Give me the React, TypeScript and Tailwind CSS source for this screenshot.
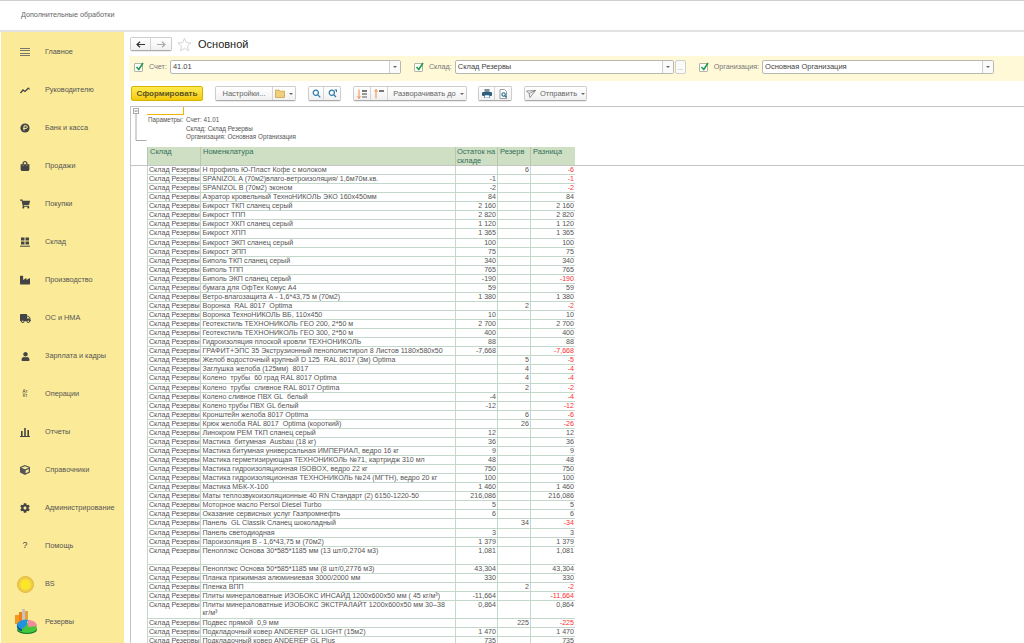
import { ReactNode } from 'react';
import { FaCog, FaCube, FaIndustry, FaShoppingBag, FaShoppingCart, FaTruck, FaUser } from 'react-icons/fa';

type Row = { name: string; stock?: string; reserve?: string; diff: string; tall?: boolean };

const rows: Row[] = [
  { name: 'Н профиль Ю-Пласт Кофе с молоком', reserve: '6', diff: '-6' },
  { name: 'SPANIZOL A (70м2)влаго-ветроизоляция/ 1,6м70м.кв.', stock: '-1', diff: '-1' },
  { name: 'SPANIZOL B (70м2) эконом', stock: '-2', diff: '-2' },
  { name: 'Аэратор кровельный ТехноНИКОЛЬ ЭКО 160х450мм', stock: '84', diff: '84' },
  { name: 'Бикрост ТКП сланец серый', stock: '2 160', diff: '2 160' },
  { name: 'Бикрост ТПП', stock: '2 820', diff: '2 820' },
  { name: 'Бикрост ХКП сланец серый', stock: '1 120', diff: '1 120' },
  { name: 'Бикрост ХПП', stock: '1 365', diff: '1 365' },
  { name: 'Бикрост ЭКП сланец серый', stock: '100', diff: '100' },
  { name: 'Бикрост ЭПП', stock: '75', diff: '75' },
  { name: 'Биполь ТКП сланец серый', stock: '340', diff: '340' },
  { name: 'Биполь ТПП', stock: '765', diff: '765' },
  { name: 'Биполь ЭКП сланец серый', stock: '-190', diff: '-190' },
  { name: 'бумага для ОфТех Комус А4', stock: '59', diff: '59' },
  { name: 'Ветро-влагозащита А - 1,6*43,75 м (70м2)', stock: '1 380', diff: '1 380' },
  { name: 'Воронка  RAL 8017  Optima', reserve: '2', diff: '-2' },
  { name: 'Воронка ТехноНИКОЛЬ ВБ, 110х450', stock: '10', diff: '10' },
  { name: 'Геотекстиль ТЕХНОНИКОЛЬ ГЕО 200, 2*50 м', stock: '2 700', diff: '2 700' },
  { name: 'Геотекстиль ТЕХНОНИКОЛЬ ГЕО 300, 2*50 м', stock: '400', diff: '400' },
  { name: 'Гидроизоляция плоской кровли ТЕХНОНИКОЛЬ', stock: '88', diff: '88' },
  { name: 'ГРАФИТ+ЭПС 35 Экструзионный пенополистирол 8 Листов 1180х580х50', stock: '-7,668', diff: '-7,668' },
  { name: 'Желоб водосточный крупный D 125  RAL 8017 (3м) Optima', reserve: '5', diff: '-5' },
  { name: 'Заглушка желоба (125мм)  8017', reserve: '4', diff: '-4' },
  { name: 'Колено  трубы  60 град RAL 8017 Optima', reserve: '4', diff: '-4' },
  { name: 'Колено  трубы  сливное RAL 8017 Optima', reserve: '2', diff: '-2' },
  { name: 'Колено сливное ПВХ GL  белый', stock: '-4', diff: '-4' },
  { name: 'Колено трубы ПВХ GL белый', stock: '-12', diff: '-12' },
  { name: 'Кронштейн желоба 8017 Optima', reserve: '6', diff: '-6' },
  { name: 'Крюк желоба RAL 8017  Optima (короткий)', reserve: '26', diff: '-26' },
  { name: 'Линокром РЕМ ТКП сланец серый', stock: '12', diff: '12' },
  { name: 'Мастика  битумная  Ausbau (18 кг)', stock: '36', diff: '36' },
  { name: 'Мастика битумная универсальная ИМПЕРИАЛ, ведро 16 кг', stock: '9', diff: '9' },
  { name: 'Мастика герметизирующая ТЕХНОНИКОЛЬ №71, картридж 310 мл', stock: '48', diff: '48' },
  { name: 'Мастика гидроизоляционная ISOBOX, ведро 22 кг', stock: '750', diff: '750' },
  { name: 'Мастика гидроизоляционная ТЕХНОНИКОЛЬ №24 (МГТН), ведро 20 кг', stock: '100', diff: '100' },
  { name: 'Мастика МБК-Х-100', stock: '1 460', diff: '1 460' },
  { name: 'Маты теплозвукоизоляционные 40 RN Стандарт (2) 6150-1220-50', stock: '216,086', diff: '216,086' },
  { name: 'Моторное масло Persol Diesel Turbo', stock: '5', diff: '5' },
  { name: 'Оказание сервисных услуг Газпромнефть', stock: '6', diff: '6' },
  { name: 'Панель  GL Classik Сланец шоколадный', reserve: '34', diff: '-34' },
  { name: 'Панель светодиодная', stock: '3', diff: '3' },
  { name: 'Пароизоляция В - 1,6*43,75 м (70м2)', stock: '1 379', diff: '1 379' },
  { name: 'Пеноплэкс Основа 30*585*1185 мм (13 шт/0,2704 м3)', stock: '1,081', diff: '1,081', tall: true },
  { name: 'Пеноплэкс Основа 50*585*1185 мм (8 шт/0,2776 м3)', stock: '43,304', diff: '43,304' },
  { name: 'Планка прижимная алюминиевая 3000/2000 мм', stock: '330', diff: '330' },
  { name: 'Пленка ВПП', reserve: '2', diff: '-2' },
  { name: 'Плиты минераловатные ИЗОБОКС ИНСАЙД 1200х600х50 мм ( 45 кг/м³)', stock: '-11,664', diff: '-11,664' },
  { name: 'Плиты минераловатные ИЗОБОКС ЭКСТРАЛАЙТ 1200х600х50 мм 30–38 кг/м³', stock: '0,864', diff: '0,864', tall: true },
  { name: 'Подвес прямой  0,9 мм', reserve: '225', diff: '-225' },
  { name: 'Подкладочный ковер ANDEREP GL LIGHT (15м2)', stock: '1 470', diff: '1 470' },
  { name: 'Подкладочный ковер ANDEREP GL Plus', stock: '735', diff: '735' },
];

const MenuIcon = () => (
  <div className="flex h-2 w-2.5 flex-col justify-between">
    <div className="h-px bg-[#77776a]" />
    <div className="h-px bg-[#77776a]" />
    <div className="h-px bg-[#77776a]" />
    <div className="h-px bg-[#77776a]" />
  </div>
);

const TrendIcon = () => (
  <svg width="10" height="7" viewBox="0 0 10 7" fill="none" stroke="#444" strokeWidth="1.3">
    <path d="M0.5 6 L3 3 L5 4.5 L8 1.5" />
    <path d="M7 0.8 L9.5 0.8 L9.5 3" fill="#444" stroke="none" />
  </svg>
);

const CoinIcon = () => (
  <svg width="10" height="10" viewBox="0 0 10 10">
    <circle cx="5" cy="5" r="4.6" fill="#444" />
    <path d="M4 7.6 V2.8 H6 A1.3 1.3 0 0 1 6 5.4 H3" fill="none" stroke="#fbeb99" strokeWidth="1" />
  </svg>
);

const WarehouseIcon = () => (
  <svg width="10" height="10" viewBox="0 0 10 10" fill="#444">
    <rect x="1" y="0.5" width="3.5" height="3" />
    <rect x="5.5" y="0.5" width="3.5" height="3" />
    <rect x="1" y="4.5" width="3.5" height="3" />
    <rect x="5.5" y="4.5" width="3.5" height="3" />
    <rect x="0" y="8.7" width="10" height="1" />
  </svg>
);

const BarsIcon = () => (
  <svg width="10" height="10" viewBox="0 0 10 10" fill="#444">
    <rect x="1" y="4" width="1.6" height="5" />
    <rect x="4.2" y="1" width="1.6" height="8" />
    <rect x="7.4" y="3" width="1.6" height="6" />
    <rect x="0" y="9" width="10" height="1" />
  </svg>
);

const SunIcon = () => (
  <svg width="17" height="17" viewBox="0 0 17 17">
    <circle cx="8.5" cy="8.5" r="8" fill="#f1cc4a" stroke="#e0b93f" />
    <circle cx="8.5" cy="8.5" r="5.2" fill="#fbe628" />
  </svg>
);

const PieIcon = () => (
  <svg className="ml-0.5" width="24" height="26" viewBox="0 0 24 26">
    <rect x="1" y="6" width="4" height="9" fill="#f39a1e" />
    <rect x="5" y="3" width="3" height="11" fill="#ee7f1a" />
    <rect x="8" y="0" width="3" height="12" fill="#c7c3bc" />
    <rect x="11" y="2" width="3" height="10" fill="#e8a23a" />
    <ellipse cx="13" cy="21" rx="10" ry="4" fill="#0f7a26" />
    <ellipse cx="13" cy="19" rx="10" ry="5" fill="#46c63c" />
    <path d="M3 15 C5 11 11 10 14 11 L12 17 L6 21 C4 20 2 18 3 15 Z" fill="#2391de" />
    <path d="M14 11 C18 11 23 13 23 17 L14 18 Z" fill="#f28a9a" />
    <path d="M3 16 C3 20 6 22 8 22 L8 20 C6 20 4 18 3 16 Z" fill="#0b4b8e" />
  </svg>
);

const navItems: { label: string; icon: ReactNode }[] = [
  { label: 'Главное', icon: <MenuIcon /> },
  { label: 'Руководителю', icon: <TrendIcon /> },
  { label: 'Банк и касса', icon: <CoinIcon /> },
  { label: 'Продажи', icon: <FaShoppingBag size={10} color="#444" /> },
  { label: 'Покупки', icon: <FaShoppingCart size={10} color="#444" /> },
  { label: 'Склад', icon: <WarehouseIcon /> },
  { label: 'Производство', icon: <FaIndustry size={10} color="#444" /> },
  { label: 'ОС и НМА', icon: <FaTruck size={11} color="#444" /> },
  { label: 'Зарплата и кадры', icon: <FaUser size={9} color="#444" /> },
  { label: 'Операции', icon: <span className="text-center text-[4.5px] leading-[4.5px] text-[#333]">Ат<br />Кт</span> },
  { label: 'Отчеты', icon: <BarsIcon /> },
  { label: 'Справочники', icon: <FaCube size={10} color="#555" /> },
  { label: 'Администрирование', icon: <FaCog size={10} color="#444" /> },
  { label: 'Помощь', icon: <span className="text-[9px] text-[#444]">?</span> },
  { label: 'BS', icon: <SunIcon /> },
  { label: 'Резервы', icon: <PieIcon /> },
];

function Sidebar() {
  return (
    <aside className="ml-px w-[123px] shrink-0 bg-[#fbeb99] pt-px">
      {navItems.map((item) => (
        <div key={item.label} className="flex h-[38px] items-center">
          <div className="flex w-[44px] shrink-0 justify-center pl-1">{item.icon}</div>
          <span className="text-[7.3px] text-[#555]">{item.label}</span>
        </div>
      ))}
    </aside>
  );
}

const Caret = () => <span className="h-0 w-0 border-x-[2px] border-t-[2px] border-x-transparent border-t-[#666]" />;

function Check() {
  return (
    <div className="relative h-[9px] w-[9px] shrink-0 rounded-[1px] border border-[#b5b5a5] bg-white">
      <svg className="absolute -top-[2px] left-0" width="10" height="10" viewBox="0 0 10 10" fill="none">
        <path d="M1.5 5 L3.8 7.5 L8 1" stroke="#1f9c4b" strokeWidth="1.6" />
      </svg>
    </div>
  );
}

function Field({ label, value, width, extra }: { label: string; value: string; width: string; extra?: boolean }) {
  return (
    <div className="flex items-center">
      <Check />
      <span className="ml-[6px] mr-[3px] text-[7.2px] text-[#777]">{label}</span>
      <div className={`flex h-[14px] items-center rounded-[2px] border border-[#b8b8b0] bg-white ${width}`}>
        <span className="flex-1 pl-0.5 text-[7.5px] text-[#444]">{value}</span>
        <div className="flex h-full w-[11px] items-center justify-center border-l border-[#cfcfc8] bg-[#fafafa]">
          <Caret />
        </div>
      </div>
      {extra && (
        <div className="ml-px flex h-[14px] w-[11px] items-end justify-center rounded-[2px] border border-[#cfcfc8] bg-[#fafafa] text-[6px] leading-[9px] text-[#666]">
          ...
        </div>
      )}
    </div>
  );
}

function Btn({ children, className = '' }: { children: ReactNode; className?: string }) {
  return (
    <div
      className={`flex h-[13px] items-center justify-center whitespace-nowrap border-r border-[#d4d4d4] bg-linear-to-b from-white to-[#f1f1f1] text-[7.5px] text-[#666] last:border-r-0 ${className}`}
    >
      {children}
    </div>
  );
}

function BtnGroup({ children }: { children: ReactNode }) {
  return (
    <div className="flex overflow-hidden rounded-[2px] border border-b-[#aaa] border-[#cdcdcd] shadow-[0_1px_1px_rgba(0,0,0,0.08)]">
      {children}
    </div>
  );
}

const SearchIcon = ({ swap }: { swap?: boolean }) => (
  <svg width="9" height="9" viewBox="0 0 9 9" fill="none" stroke="#2a7aa8" strokeWidth="1.2">
    <circle cx="3.8" cy="3.8" r="2.6" />
    <path d={swap ? 'M6 6 L8 8 M6.5 1 L8.5 1 L8.5 3' : 'M5.8 5.8 L8.3 8.3'} />
  </svg>
);

const SortIcon = ({ long }: { long?: boolean }) => (
  <svg width="11" height="10" viewBox="0 0 11 10">
    <path d="M2 0.5 V9.5" stroke="#ef8a4a" strokeWidth="1" />
    <path d={long ? 'M0.5 3 L2 0.5 L3.5 3' : 'M0.5 7 L2 9.5 L3.5 7'} fill="none" stroke="#ef8a4a" strokeWidth="0.8" />
    <rect x="5" y="1" width="5" height="2" fill="#777" />
    {!long && <rect x="5" y="4" width="5" height="2" fill="#999" />}
    {!long && <rect x="5" y="7" width="5" height="2" fill="#aaa" />}
  </svg>
);

const Arrow = ({ back, color }: { back?: boolean; color: string }) => (
  <svg width="9" height="7" viewBox="0 0 9 7" fill="none" stroke={color} strokeWidth="1.2">
    <path d={back ? 'M9 3.5 H1 M4 0.7 L1 3.5 L4 6.3' : 'M0 3.5 H8 M5 0.7 L8 3.5 L5 6.3'} />
  </svg>
);

function Toolbar() {
  return (
    <div className="mt-[5px] flex h-[15px] items-start pl-px">
      <div className="flex h-[15px] w-[72px] items-center justify-center rounded-[2px] border border-[#d5b400] bg-linear-to-b from-[#ffec4d] to-[#f4c900] text-[8px] font-bold text-[#5b5420]">
        Сформировать
      </div>
      <div className="ml-3">
        <BtnGroup>
          <Btn className="w-[57px]">Настройки...</Btn>
          <Btn className="w-[22px] gap-1">
            <svg width="10" height="9" viewBox="0 0 10 9">
              <path d="M0.5 1 H4 L5 2.2 H9.5 V8.5 H0.5 Z" fill="#f0cf7a" stroke="#c79a3a" strokeWidth="0.7" />
            </svg>
            <Caret />
          </Btn>
        </BtnGroup>
      </div>
      <div className="ml-3">
        <BtnGroup>
          <Btn className="w-[15px]"><SearchIcon /></Btn>
          <Btn className="w-[16px]"><SearchIcon swap /></Btn>
        </BtnGroup>
      </div>
      <div className="ml-3">
        <BtnGroup>
          <Btn className="w-[17px]"><SortIcon /></Btn>
          <Btn className="w-[17px]"><SortIcon long /></Btn>
          <Btn className="w-[78px] gap-1 pl-[3px]">Разворачивать до <Caret /></Btn>
        </BtnGroup>
      </div>
      <div className="ml-[11px]">
        <BtnGroup>
          <Btn className="w-[16px]">
            <svg width="10" height="9" viewBox="0 0 10 9" fill="#2f5f80">
              <rect x="2.5" y="0" width="5" height="3" fill="#7d8d98" />
              <rect x="0" y="3" width="10" height="4" rx="1" />
              <rect x="2.5" y="6" width="5" height="3" fill="#fff" stroke="#2f5f80" strokeWidth="0.6" />
            </svg>
          </Btn>
          <Btn className="w-[16px]">
            <svg width="9" height="10" viewBox="0 0 9 10" fill="none">
              <path d="M1 0.5 H5.5 L7.5 2.5 V9.5 H1 Z" stroke="#777" strokeWidth="0.7" fill="#fff" />
              <circle cx="4.6" cy="5.5" r="1.7" stroke="#1f6f96" strokeWidth="1.1" />
              <path d="M5.8 6.7 L7.5 8.5" stroke="#1f6f96" strokeWidth="1.1" />
            </svg>
          </Btn>
        </BtnGroup>
      </div>
      <div className="ml-3">
        <BtnGroup>
          <Btn className="w-[61px] gap-1">
            <svg width="10" height="8" viewBox="0 0 10 8" fill="none" stroke="#666" strokeWidth="0.7">
              <path d="M0.5 1 L9.5 0.5 L4 7.5 L3 3.5 Z M3 3.5 L9.5 0.5" />
            </svg>
            Отправить <Caret />
          </Btn>
        </BtnGroup>
      </div>
    </div>
  );
}

const cell = 'overflow-hidden border-r border-[#c3d7cb] px-px';

function TableRow({ row }: { row: Row }) {
  return (
    <div
      className={`flex w-[428px] border-b border-l border-[#c3d7cb] text-[7.1px] leading-[8px] text-[#555] ${
        row.tall ? 'h-[18px]' : 'h-[9.07px]'
      }`}
    >
      <div className={`${cell} w-[53px] whitespace-nowrap`}>Склад Резервы</div>
      <div className={`${cell} w-[255px] whitespace-pre-wrap pl-[1.5px] pr-[8px]`}>{row.name}</div>
      <div className={`${cell} w-[42px] text-right`}>{row.stock}</div>
      <div className={`${cell} w-[33px] text-right`}>{row.reserve}</div>
      <div className={`w-[44px] px-px text-right ${row.diff.startsWith('-') ? 'text-[#ff3030]' : ''}`}>{row.diff}</div>
    </div>
  );
}

function Report() {
  return (
    <div className="mt-[5px] min-h-0 flex-1 border-l border-t border-[#c4c4c4]">
      <div className="flex h-[59px] border-b border-[#c4c4c4]">
        <div className="w-4 shrink-0 pl-[2px] pt-px">
          <svg width="14" height="33" viewBox="0 0 14 33" fill="none" stroke="#aaa" strokeWidth="1">
            <rect x="0.5" y="0.5" width="5" height="5" />
            <path d="M1.5 3 H4.5" stroke="#777" />
            <path d="M3 5.5 V32.5 H13.5" />
          </svg>
        </div>
        <div className="flex flex-col">
          <div className="h-[8px] w-[37px] border-b border-r border-[#f0b400] bg-white" />
          <div className="mt-px grid h-[31px] w-[200px] grid-cols-[39px_1fr] content-start text-[6.3px] leading-[8.5px] text-[#555]">
            <span className="pl-px">Параметры:</span>
            <span>Счет: 41.01</span>
            <span />
            <span>Склад: Склад Резервы</span>
            <span />
            <span>Организация: Основная Организация</span>
          </div>
          <div className="flex h-[18px] w-[428px] border-l border-[#b5c9b0] bg-[#cfdfc4] text-[7.5px] leading-[9px] text-[#33705a]">
            <div className="w-[53px] border-r border-[#b5c9b0] px-0.5">Склад</div>
            <div className="w-[255px] border-r border-[#b5c9b0] px-0.5">Номенклатура</div>
            <div className="w-[42px] border-r border-[#b5c9b0] px-px">Остаток на складе</div>
            <div className="w-[33px] border-r border-[#b5c9b0] px-0.5">Резерв</div>
            <div className="w-[44px] px-0.5">Разница</div>
          </div>
        </div>
      </div>
      <div className="pl-4">
        {rows.map((row) => (
          <TableRow key={row.name} row={row} />
        ))}
      </div>
    </div>
  );
}

export default function App() {
  return (
    <div className="flex h-[643px] w-[1024px] flex-col overflow-hidden bg-white font-['Liberation_Sans',Arial,sans-serif]">
      <header className="flex h-[32px] shrink-0 items-center border-b-2 border-t border-b-[#e2e2e2] border-t-[#cfcfcf] pl-[21px] text-[7.2px] text-[#666]">
        Дополнительные обработки
      </header>
      <div className="flex min-h-0 flex-1">
        <Sidebar />
        <main className="flex min-w-0 flex-1 flex-col pl-[6px]">
          <div className="mt-[5px] flex h-[14px] items-center">
            <BtnGroup>
              <Btn className="!h-[12px] w-[20px]"><Arrow back color="#333" /></Btn>
              <Btn className="!h-[12px] w-[20px]"><Arrow color="#aaa" /></Btn>
            </BtnGroup>
            <svg className="ml-[5px]" width="15" height="15" viewBox="0 0 24 24" fill="none" stroke="#d2d2d2" strokeWidth="1.5">
              <path d="M12 2 L15 9 L22.5 9.5 L16.8 14.5 L18.5 22 L12 18 L5.5 22 L7.2 14.5 L1.5 9.5 L9 9 Z" />
            </svg>
            <h1 className="ml-[6px] text-[11px] text-[#222]">Основной</h1>
          </div>
          <div className="-ml-px mt-[5px] flex h-[25px] shrink-0 items-start gap-[13px] bg-[#fff9d8] pl-[5px] pt-[4px]">
            <Field label="Счет:" value="41.01" width="w-[231px]" />
            <Field label="Склад:" value="Склад Резервы" width="w-[219px]" extra />
            <Field label="Организация:" value="Основная Организация" width="w-[232px]" />
          </div>
          <Toolbar />
          <Report />
        </main>
      </div>
    </div>
  );
}
